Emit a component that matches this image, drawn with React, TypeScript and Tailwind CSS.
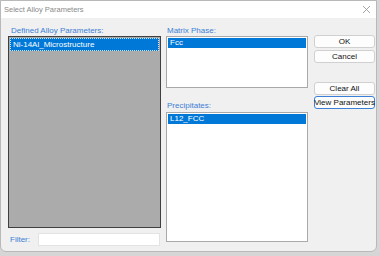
export default function App() {
  const font = { fontFamily: '"Liberation Sans", Arial, sans-serif' };
  const btn =
    "h-[13px] w-full px-0 bg-[#fdfdfd] border rounded-[3px] text-[#111] text-[8px] leading-none whitespace-nowrap flex items-center justify-center";
  return (
    <div className="w-[380px] h-[256px] bg-[#d6d6d6] overflow-hidden" style={font}>
      <div className="w-[377px] h-[252px] flex flex-col bg-[#f0f0f0] border border-[#b9b9b9] rounded-b-[6px] overflow-hidden">
        {/* Title bar */}
        <div className="h-[17px] bg-white flex items-center justify-between pl-[3px] pr-[4px]">
          <span className="text-[7.5px] text-[#8a8a8a] leading-none">Select Alloy Parameters</span>
          <svg width="9" height="9" viewBox="0 0 9 9" className="mr-[1px]">
            <path d="M1 1 L8 8 M8 1 L1 8" stroke="#9a9a9a" strokeWidth="0.9" />
          </svg>
        </div>

        {/* Body */}
        <div className="flex-1 flex pl-[7px] pt-[7px] gap-[5px] text-[8px] leading-none">
          {/* Left column */}
          <div className="w-[153px] flex flex-col">
            <div className="h-[11px] pl-[3px] text-[#3c7fd6] flex items-center">Defined Alloy Parameters:</div>
            <div className="h-[192px] bg-[#ababab] border border-[#3f3f3f] p-[1px]">
              <div className="h-[13px] bg-[#0078d7] text-white flex items-center pl-[3px] outline outline-1 outline-dotted outline-[#cfe4f7] -outline-offset-1">
                Ni-14Al_Microstructure
              </div>
            </div>
            <div className="flex items-center mt-[5px] h-[13px]">
              <span className="text-[#3c7fd6] pl-[2px] w-[30px]">Filter:</span>
              <div className="h-[13px] w-[122px] bg-white border border-[#e3e3e3]" />
            </div>
          </div>

          {/* Middle column */}
          <div className="w-[142px] flex flex-col">
            <div className="h-[11px] pl-[1px] text-[#3c7fd6] flex items-center">Matrix Phase:</div>
            <div className="h-[52px] bg-white border border-[#a9a9a9] p-[1px]">
              <div className="h-[10px] bg-[#0078d7] text-white flex items-center pl-[2px]">Fcc</div>
            </div>
            <div className="h-[11px] mt-[12px] pl-[1px] text-[#3c7fd6] flex items-center">Precipitates:</div>
            <div className="h-[130px] mt-[1px] bg-white border border-[#a9a9a9] p-[1px]">
              <div className="h-[10px] bg-[#0078d7] text-white flex items-center pl-[2px]">L12_FCC</div>
            </div>
          </div>

          {/* Buttons */}
          <div className="w-[61px] flex flex-col pt-[10px] ml-[1px]">
            <button className={`${btn} border-[#d0d0d0]`}>OK</button>
            <button className={`${btn} mt-[2px] border-[#d0d0d0]`}>Cancel</button>
            <button className={`${btn} mt-[19px] border-[#d0d0d0]`}>Clear All</button>
            <button className={`${btn} mt-[1px] border-[#3c7fd6]`}>View Parameters</button>
          </div>
        </div>
      </div>
    </div>
  );
}
